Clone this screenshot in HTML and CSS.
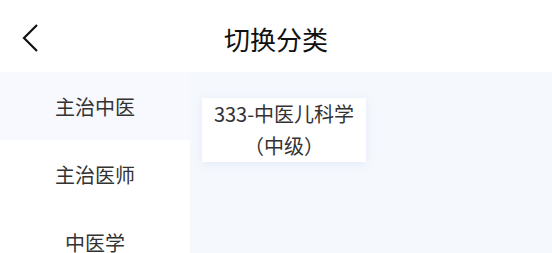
FILE: index.html
```html
<!DOCTYPE html>
<html lang="zh">
<head>
<meta charset="utf-8">
<link rel="stylesheet" href="styles.css">
</head>
<body>
<header class="nav">
  <span class="back"><svg width="20" height="30" viewBox="0 0 20 30"><path d="M17 2 L4 15 L17 28" fill="none" stroke="#111" stroke-width="2.2"/></svg></span>
  <h1 class="title">切换分类</h1>
</header>
<main class="body">
  <nav class="side">
    <div class="item active">主治中医</div>
    <div class="item">主治医师</div>
    <div class="item">中医学</div>
  </nav>
  <section class="panel">
    <div class="card">333-中医儿科学<br>（中级）</div>
  </section>
</main>
</body>
</html>
```
FILE: styles.css
```css
* { box-sizing: border-box; margin: 0; padding: 0; }
html, body { width: 552px; height: 253px; overflow: hidden; background: #fff; }
body { font-family: "Noto Sans CJK SC", "Noto Sans", sans-serif; color: #333; }
.nav { height: 72px; display: flex; align-items: center; justify-content: center; position: relative; }
.back { position: absolute; left: 20px; top: 23px; display: flex; }
.title { font-size: 26px; font-weight: 400; color: #111; margin-top: 4px; }
.body { display: flex; height: 181px; }
.side { width: 190px; display: flex; flex-direction: column; overflow: hidden; }
.item { height: 68px; flex-shrink: 0; display: flex; align-items: center; justify-content: center; font-size: 20px; color: #333; }
.item.active { background: #f7f9fe; }
.panel { flex: 1; background: #f5f8fd; padding: 26px 12px; }
.card { width: 164px; background: #fff; text-align: center; font-size: 20px; line-height: 32px; color: #333; box-shadow: 0 2px 8px rgba(180,200,230,0.25); }
```
